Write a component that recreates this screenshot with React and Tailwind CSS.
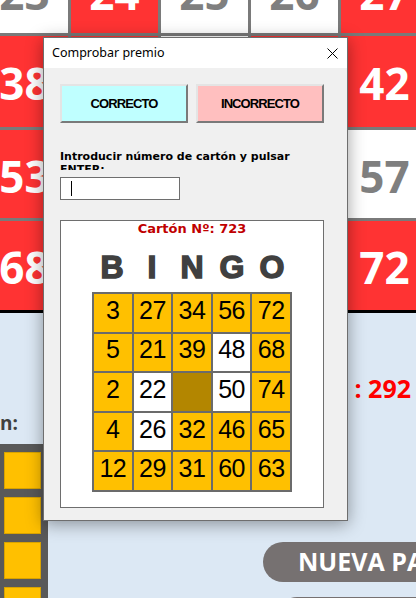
import React from 'react'

// cells hidden under the dialog keep their colour but carry no number
const board = [
  { height: 'h-[84px]', cells: [[23, 0], [24, 1], [25, 0], [26, 0], [27, 1]] },
  { height: 'h-[91px]', cells: [[38, 1], [null, 1], [null, 0], [null, 1], [42, 1]] },
  { height: 'h-[88px]', cells: [[53, 1], [null, 0], [null, 1], [null, 1], [57, 0]] },
  { height: 'h-[89px]', cells: [[68, 1], [null, 0], [null, 1], [null, 0], [72, 1]] },
]

const carton = [
  [3, 27, 34, 56, 72],
  [5, 21, 39, 48, 68],
  [2, 22, null, 50, 74],
  [4, 26, 32, 46, 65],
  [12, 29, 31, 60, 63],
]

const marked = ['1-3', '2-1', '2-3', '3-1']

const BoardCell = ({ value, red }) => (
  <div
    className={`w-[87px] h-full shrink-0 flex items-center justify-center pt-[3px] font-['Open_Sans',sans-serif] font-bold text-[44px] leading-none ${
      red ? 'bg-[#ff3333] text-white' : 'bg-white text-[#7f7f7f]'
    }`}
  >
    {value}
  </div>
)

const CloseIcon = () => (
  <svg width="11" height="11" viewBox="0 0 11 11" fill="none">
    <path d="M0.5 0.5L10.5 10.5M10.5 0.5L0.5 10.5" stroke="#000" strokeWidth="1" />
  </svg>
)

const PrizeDialog = () => (
  <div className="absolute left-[43px] top-[37px] w-[305px] h-[484px] border border-[#6e6e6e] bg-[#f0f0f0] shadow-[0_3px_16px_rgba(0,0,0,0.38)] flex flex-col">
    <div className="h-[30px] bg-white flex items-center justify-between pl-[8px] pr-[9px] font-['Noto_Sans',sans-serif] text-[12.5px] text-black">
      <span>Comprobar premio</span>
      <CloseIcon />
    </div>

    <div className="flex flex-col pl-[16px] pt-[16px]">
      <div className="flex gap-[8px] font-['Liberation_Sans',sans-serif] font-bold text-[13px] tracking-[-0.9px] text-black">
        <button className="w-[128px] h-[39px] bg-[#bfffff] border-2 border-t-[#e4e4e4] border-l-[#e4e4e4] border-r-[#7a7a7a] border-b-[#7a7a7a]">
          CORRECTO
        </button>
        <button className="w-[128px] h-[39px] bg-[#ffbfbf] border-2 border-t-[#e4e4e4] border-l-[#e4e4e4] border-r-[#7a7a7a] border-b-[#7a7a7a]">
          INCORRECTO
        </button>
      </div>

      <div className="mt-[27px] w-[240px] h-[20px] overflow-hidden font-['DejaVu_Sans',sans-serif] font-bold text-[11px] leading-[13px] text-black">
        Introducir número de cartón y pulsar ENTER:
      </div>

      <div className="mt-[7px] w-[120px] h-[23px] bg-white border border-[#6e6e6e] flex items-center pl-[10px]">
        <span className="w-px h-[15px] bg-black" />
      </div>

      <div className="mt-[20px] w-[264px] h-[288px] bg-white border border-[#6e6e6e] flex flex-col items-center">
        <div className="font-['DejaVu_Sans',sans-serif] font-bold text-[13px] leading-[16px] text-[#c00000]">
          Cartón Nº: 723
        </div>

        <div className="mt-[12px] w-[200px] grid grid-cols-5 font-['Liberation_Sans',sans-serif] font-bold text-[32px] leading-[36px] text-[#404040] [-webkit-text-stroke:1.5px_#404040]">
          {['B', 'I', 'N', 'G', 'O'].map((letter) => (
            <span key={letter} className="text-center">{letter}</span>
          ))}
        </div>

        <div className="mt-[7px] w-[200px] h-[200px] grid grid-cols-5 grid-rows-5 gap-[2px] p-[2px] bg-[#6b6b6b]">
          {carton.map((row, r) =>
            row.map((num, c) => {
              const isFree = num === null
              const isMarked = marked.includes(`${r}-${c}`)
              return (
                <div
                  key={`${r}-${c}`}
                  className={`flex items-center justify-center pb-[5px] font-['Liberation_Sans',sans-serif] text-[25px] leading-none tracking-[-0.5px] text-black ${
                    isFree ? 'bg-[#b38600]' : isMarked ? 'bg-white' : 'bg-[#ffc000]'
                  }`}
                >
                  {num}
                </div>
              )
            })
          )}
        </div>
      </div>
    </div>
  </div>
)

export default function App() {
  return (
    <div className="relative w-[416px] h-[598px] overflow-hidden bg-[#dce8f4]">
      <div className="w-[447px] -ml-[19px] -mt-[51px] flex flex-col gap-[3px] bg-[#7a7a7a] border-b-[3px] border-black">
        {board.map((row, i) => (
          <div key={i} className={`flex gap-[3px] ${row.height}`}>
            {row.cells.map(([value, red], j) => (
              <BoardCell key={j} value={value} red={red} />
            ))}
          </div>
        ))}
      </div>

      <div className="mt-[60px] h-[30px] flex justify-end pr-[5px] font-['Open_Sans',sans-serif] font-bold text-[25px] leading-[30px] text-[#ff0000]">
        : 292
      </div>

      <div className="mt-[8px] h-[24px] font-['Open_Sans',sans-serif] font-bold text-[19px] leading-[24px] text-[#404040]">
        n:
      </div>

      <div className="mt-[9px] flex">
        <div className="w-[48px] shrink-0 bg-[#595959] pt-[8px] pl-[4px] flex flex-col gap-[8px] h-[200px]">
          {[0, 1, 2, 3].map((i) => (
            <div key={i} className="w-[37px] h-[37px] bg-[#ffc000] border border-[#d9a300]" />
          ))}
        </div>
        <div className="flex flex-col ml-[215px] mt-[98px] gap-[15px]">
          <div className="w-[240px] h-[40px] rounded-full bg-[#767171] pl-[35px] flex items-center font-['Open_Sans',sans-serif] font-bold text-[25px] text-white whitespace-nowrap">
            NUEVA PARTIDA
          </div>
          <div className="w-[240px] h-[40px] ml-[14px] rounded-full bg-[#767171]" />
        </div>
      </div>

      <PrizeDialog />
    </div>
  )
}
